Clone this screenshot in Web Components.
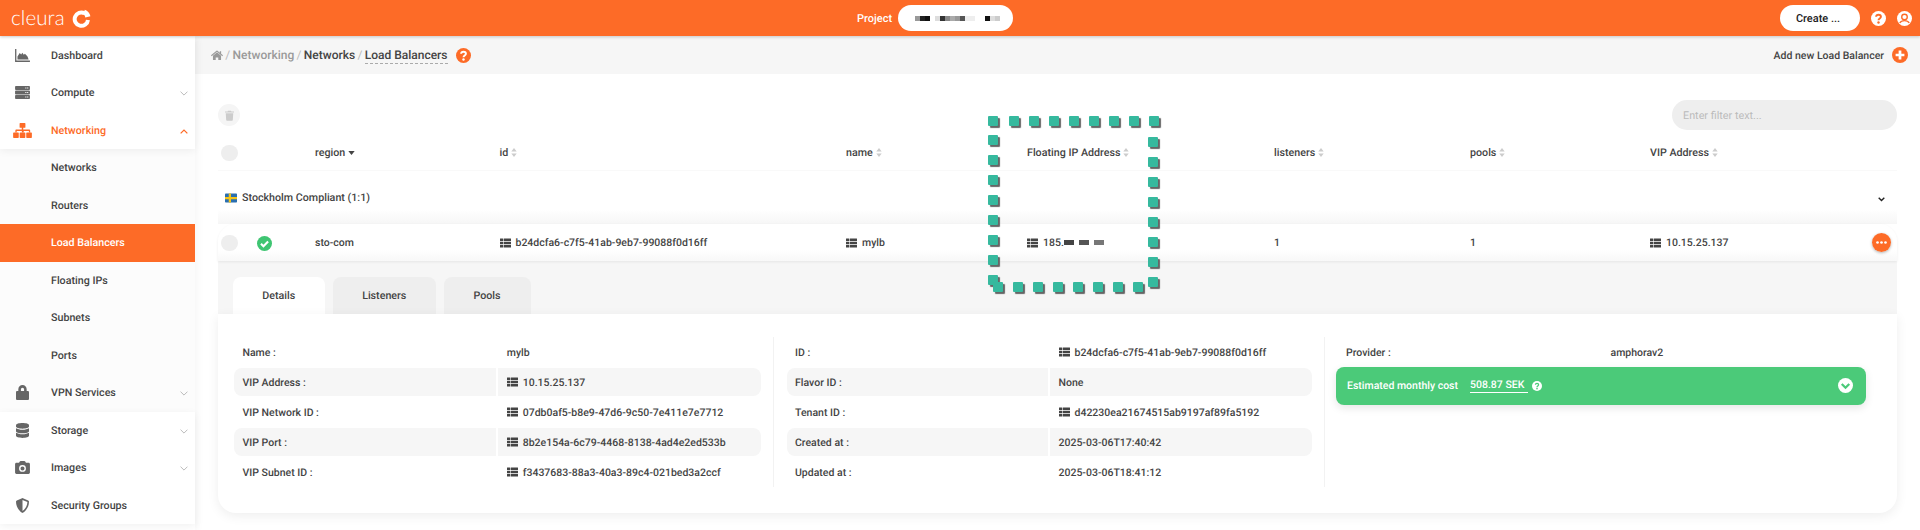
<!DOCTYPE html>
<html><head><meta charset="utf-8"><title>Load Balancers</title>
<style>
html,body{margin:0;padding:0;height:530px;overflow:hidden;background:#fff;font-family:Roboto,"Liberation Sans",sans-serif;color:#444;font-size:10.500px;font-weight:500;text-rendering:geometricPrecision}
</style></head><body>
<script>
const ICONS={
chart:'<svg viewBox="0 0 16 14"><path d="M0 0h1.4v12.4H16V14H0z"/><path d="M2.6 11.4V8l2.4-3.6 1.6 1.6 1.2-2 1.6 2.2 1.2-1.2 1.6 1.6 1.2 1.6 1.2 3.2z"/></svg>',
server:'<svg viewBox="0 0 16 14"><g fill-rule="evenodd"><path d="M.8 0h14.4c.4 0 .8.4.8.8v2.8c0 .4-.4.8-.8.8H.8c-.4 0-.8-.4-.8-.8V.8C0 .4.4 0 .8 0zM11 1.6v1.2h1.2V1.6zm2 0v1.2h1.2V1.6z"/><path d="M.8 4.9h14.4c.4 0 .8.4.8.8v2.6c0 .4-.4.8-.8.8H.8c-.4 0-.8-.4-.8-.8V5.700c0-.4.4-.8.8-.8zM11 6.400v1.200h1.200V6.400zm2 0v1.200h1.200V6.400z"/><path d="M.8 9.600h14.400c.4 0 .8.4.8.8v2.800c0 .4-.4.8-.8.8H.8c-.4 0-.8-.4-.8-.8v-2.800c0-.4.4-.8.8-.8zM11 11.200v1.200h1.200v-1.200zm2 0v1.200h1.200v-1.200z"/></g></svg>',
sitemap:'<svg viewBox="0 0 20 16"><path d="M7.500 0h5c.3 0 .6.300.6.600v3.800c0 .3-.3.600-.6.600h-1.700v2h6.400c.6 0 1 .4 1 1V10h-1.400V8.400h-5.500V10H9.300V8.400H3.800V10H2.400V7.900c0-.5.500-.9 1-.9h5.800V5H7.500c-.3 0-.6-.3-.6-.6V.6c0-.3.3-.6.600-.6z"/><rect x="0" y="10" width="6" height="6" rx=".7"/><rect x="7" y="10" width="6" height="6" rx=".7"/><rect x="14" y="10" width="6" height="6" rx=".7"/></svg>',
lock:'<svg viewBox="0 0 14 16"><path d="M11.500 6.500V4.600C11.500 2 9.500 0 7 0S2.500 2 2.500 4.600v1.900H1.400C.6 6.500 0 7.100 0 7.900v6.700C0 15.400.6 16 1.400 16h11.200c.8 0 1.400-.6 1.400-1.400V7.900c0-.8-.6-1.400-1.400-1.400zm-2.800 0H5.300V4.600C5.300 3.600 6 2.800 7 2.800s1.700.8 1.700 1.800z"/></svg>',
database:'<svg viewBox="0 0 14 16"><path d="M14 2.300v1.400C14 5 10.900 6 7 6S0 5 0 3.700V2.300C0 1 3.100 0 7 0s7 1 7 2.300z"/><path d="M14 5.500v3.200C14 10 10.900 11 7 11S0 10 0 8.700V5.500c1.500 1 4.200 1.600 7 1.600s5.500-.6 7-1.600z"/><path d="M14 10.500v3.200C14 15 10.900 16 7 16s-7-1-7-2.300v-3.200c1.500 1 4.200 1.600 7 1.600s5.500-.6 7-1.600z"/></svg>',
camera:'<svg viewBox="0 0 16 14"><path fill-rule="evenodd" d="M16 3.500v9C16 13.300 15.300 14 14.500 14h-13C.7 14 0 13.300 0 12.500v-9C0 2.700.7 2 1.500 2h2.800l.4-1C5 .4 5.600 0 6.200 0h3.600c.6 0 1.200.4 1.500 1l.4 1h2.800c.8 0 1.500.7 1.500 1.500zM8 4.300a3.700 3.700 0 1 0 0 7.400 3.700 3.700 0 0 0 0-7.400zm0 1.500a2.200 2.200 0 1 1 0 4.400 2.200 2.200 0 0 1 0-4.400z"/></svg>',
shield:'<svg viewBox="0 0 14 16"><path fill-rule="evenodd" d="M13.100 2.500 7.500.1a1.300 1.300 0 0 0-1 0L.9 2.500C.4 2.700 0 3.200 0 3.700 0 9.600 3.400 13.700 6.500 15.900c.3.200.7.200 1 0C10 14.100 14 10.300 14 3.700c0-.5-.4-1-.9-1.200zM7 13.900V2l5.300 2.200C12.100 9 9.400 12.200 7 13.900z"/></svg>',
home:'<svg viewBox="0 0 16 13"><path d="M8 2.300 2.600 6.800v5.200c0 .3.200.5.500.5h3.200V9.200h3.400v3.300h3.200c.3 0 .5-.2.500-.5V6.800z"/><path d="M16 6.300 13.500 4.200V.9h-1.800v1.800L8.700.3a1 1 0 0 0-1.400 0L0 6.300l.9 1.100L8 1.500l7.100 5.900z"/></svg>',
th:'<svg viewBox="0 0 12 10"><g><rect width="3.400" height="2.800" rx=".3"/><rect x="4" width="8" height="2.800" rx=".3"/><rect y="3.600" width="3.400" height="2.800" rx=".3"/><rect x="4" y="3.600" width="8" height="2.800" rx=".3"/><rect y="7.200" width="3.400" height="2.800" rx=".3"/><rect x="4" y="7.200" width="8" height="2.800" rx=".3"/></g></svg>',
trash:'<svg viewBox="0 0 12 14"><path d="M0 1.500h3.500L4 .5h4l.5 1H12v1.500H0z"/><path d="M1 4h10l-.6 9c0 .6-.5 1-1 1H2.600c-.5 0-1-.4-1-1z"/></svg>',
sort:'<svg viewBox="0 0 6 10"><path d="M3 0l3 4H0zM3 10 0 6h6z"/></svg>',
caret:'<svg viewBox="0 0 8 5"><path d="M0 0h8L4 5z"/></svg>',
chev:'<svg viewBox="0 0 10 6"><path d="M.7.7 5 5 9.300.7" fill="none" stroke="currentColor" stroke-width="1"/></svg>',
chevbold:'<svg viewBox="0 0 10 7"><path d="M1 1l4 4 4-4" fill="none" stroke="currentColor" stroke-width="2"/></svg>',
chevup:'<svg viewBox="0 0 10 6"><path d="M.8 5.300 5 1.200l4.200 4.100" fill="none" stroke="currentColor" stroke-width="1.600"/></svg>'
};
const q=(bg,fg,sw=2.6)=>`<svg viewBox="0 0 20 20"><circle cx="10" cy="10" r="10" fill="${bg}"/><path d="M6.800 7.600C6.900 5.900 8.200 4.900 10 4.900c1.900 0 3.200 1.100 3.200 2.700 0 2.300-3.200 2.300-3.200 4.700" fill="none" stroke="${fg}" stroke-width="${sw}"/><circle cx="10" cy="15.300" r="1.600" fill="${fg}"/></svg>`;
Object.assign(ICONS,{
helporange:q('#fd6b27','#fff'),
helpwhite:q('#fff','#fd6b27'),
helpgreen:q('#fff','#4bca79'),
user:'<svg viewBox="0 0 20 20"><circle cx="10" cy="10" r="10" fill="#fff"/><circle cx="10" cy="8" r="3.700" fill="none" stroke="#fd6b27" stroke-width="1.800"/><path d="M3.700 16c1.300-2.300 3.500-3.200 6.300-3.200s5 .9 6.300 3.200" fill="none" stroke="#fd6b27" stroke-width="1.800"/></svg>',
plus:'<svg viewBox="0 0 20 20"><circle cx="10" cy="10" r="10" fill="#fd6b27"/><path d="M10 4.500v11M4.500 10h11" stroke="#fff" stroke-width="3.400" fill="none"/></svg>',
dots:'<svg viewBox="0 0 20 20"><circle cx="10" cy="10" r="10" fill="#fd6b27"/><circle cx="5.800" cy="10" r="1.400" fill="#fff"/><circle cx="10" cy="10" r="1.400" fill="#fff"/><circle cx="14.200" cy="10" r="1.400" fill="#fff"/></svg>',
check:'<svg viewBox="0 0 20 20"><circle cx="10" cy="10" r="10" fill="#3fc572"/><path d="M5.300 10.300l3.300 3.300 6.200-6.400" fill="none" stroke="#fff" stroke-width="2.800"/></svg>',
chevcircle:'<svg viewBox="0 0 20 20"><circle cx="10" cy="10" r="10" fill="#fff"/><path d="M5 8l5 5 5-5" fill="none" stroke="#4bca79" stroke-width="3"/></svg>',
flag:'<svg viewBox="0 0 16 12"><rect width="16" height="12" rx="1" fill="#2a6fb0"/><path d="M5 0h3v12H5zM0 4.500h16v3H0z" fill="#f5c518"/></svg>',
logo:'<svg viewBox="0 0 20 20"><path d="M13.200 4.600A7 7 0 1 0 16.800 11.500" fill="none" stroke="#fff" stroke-width="4.200"/><path d="M13.500.8A9.500 9.500 0 0 1 19.400 7.500L14 9A4 4 0 0 0 12 5.500z" fill="#fff"/></svg>'
});
const el=(name,html,extra={})=>customElements.define(name,class extends HTMLElement{
  connectedCallback(){ if(this.shadowRoot) return; const r=this.attachShadow({mode:'open'}); r.innerHTML=typeof html==='function'?html(this):html; extra.init&&extra.init(this,r);}
});
el('cl-icon',h=>{const s=h.getAttribute('size')||'12',[w,he]=s.split('x');return `<style>:host{display:inline-flex;flex:none;width:${w}px;height:${he||w}px;color:${h.getAttribute('color')||'inherit'};fill:currentColor;line-height:0}svg{width:100%;height:100%;display:block}</style>${ICONS[h.getAttribute('name')]}`});

el('cl-topbar',`<style>:host{display:flex;align-items:center;height:36px;background:#fd6b27;box-shadow:0 1px 3px rgba(0,0,0,.2);position:relative;z-index:3;color:#fff}
.logo{display:flex;align-items:center;width:852px;padding-left:11px;box-sizing:border-box;font:300 20.500px Lato,sans-serif;letter-spacing:.1px;gap:7px}
.proj{font-weight:500;font-size:11px;margin:0 8px 0 5px;width:33px}
.pill{height:26px;background:#fff;border-radius:13px;display:flex;align-items:center;color:#000;box-sizing:border-box}
.sel{width:115px;padding:0 0 0 17px}.sel i{display:block;width:5px;height:5px}
.create{width:80px;margin-left:767px;justify-content:center;font-weight:500;font-size:11px;color:#222;padding-right:4px}
.ic{margin-left:11px;display:flex;gap:11px;align-items:center}</style>
<div class="logo"><span>cleura</span><cl-icon name="logo" size="19"></cl-icon></div>
<span class="proj"><slot name="project"></slot></span>
<div class="pill sel"><i style="background:#999"></i><i style="background:#222"></i><i style="background:#111"></i><i style="background:#fff"></i><i style="background:#ddd"></i><i style="background:#333"></i><i style="background:#888"></i><i style="background:#aaa"></i><i style="background:#999"></i><i style="background:#555"></i><i style="background:#eee"></i><i style="background:#eee"></i><i style="background:#fff"></i><i style="background:#fff"></i><i style="background:#111"></i><i style="background:#ddd"></i><i style="background:#ccc"></i></div>
<div class="pill create"><slot name="create"></slot></div>
<div class="ic"><cl-icon name="helpwhite" size="15"></cl-icon><cl-icon name="user" size="15"></cl-icon></div>`);

el('cl-sidebar',`<style>:host{display:flex;flex-direction:column;width:195px;flex:none;background:#fff;box-shadow:0 0 10px rgba(0,0,0,.06);position:relative;z-index:2;padding-top:.500px}</style><slot></slot>`);
el('cl-nav-group',`<style>:host{display:block;background:#fff}:host([sub]){background:#fcfcfc}:host([raised]){box-shadow:0 2px 8px rgba(0,0,0,.06);position:relative;z-index:1}</style><slot></slot>`);
el('cl-nav-item',`<style>:host{display:flex;align-items:center;height:37.500px;color:#444;position:relative;font-size:10.700px}
:host([current]){color:#fd6b27}:host([active]){background:#fd6b27;color:#fff}
.ic{width:51px;flex:none;display:flex;justify-content:center;padding-right:7px;box-sizing:border-box;color:#666}
:host([current]) .ic{color:#fd6b27}
.t{flex:1}.ch{width:22px;flex:none;display:none;color:#aaa;padding-left:7px;box-sizing:border-box}:host([more]) .ch{display:block}:host([current]) .ch{color:#fd6b27}</style>
<span class="ic"><slot name="icon"></slot></span><span class="t"><slot></slot></span><span class="ch"><slot name="chev"></slot></span>`);

el('cl-breadbar',`<style>:host{display:flex;align-items:center;height:38px;background:#f6f6f6;flex:none;padding:0 12px 0 16px;font-size:12px;color:#888;font-weight:500}
.l{display:flex;align-items:center;flex:1;gap:2.300px}.r{display:flex;align-items:center;gap:8px;color:#444;font-size:10.500px}
</style><div class="l"><slot name="left"></slot></div><div class="r"><slot name="right"></slot></div>`);
el('cl-crumb',`<style>:host{display:inline-block;color:#9a9a9a}:host([dark]){color:#444}:host([cur]){color:#444;border-bottom:1px dashed #aaa;padding-bottom:1px;margin-top:2px}:host([sep]){color:#bbb;font-weight:400}</style><slot></slot>`);

el('cl-toolbar',`<style>:host{display:flex;align-items:center;justify-content:space-between;height:30px;margin-top:26px}
.tr{width:22px;height:22px;margin-left:0;border-radius:50%;background:#f5f5f5;display:flex;align-items:center;justify-content:center;color:#ccc}
.f{width:225px;height:30px;border-radius:15px;background:#eee;color:#bbb;display:flex;align-items:center;padding-left:11px;box-sizing:border-box;font-weight:400;font-size:10.800px}</style>
<div class="tr"><cl-icon name="trash" size="9x11"></cl-icon></div><div class="f"><slot></slot></div>`);

const cols='97px 184.500px 346.500px 181px 247px 196px 180px 1fr';
el('cl-table-head',`<style>:host{display:grid;grid-template-columns:${cols};align-items:center;height:35px;border-bottom:1px solid #f9f9f9;margin-top:5px;position:relative;font-size:10.700px}
.cb{position:absolute;left:3px;top:9.500px;width:16.500px;height:16.500px;border-radius:50%;background:#eee}</style><div class="cb"></div><span></span><slot></slot>`);
el('cl-th',`<style>:host{display:inline-flex;align-items:center;gap:3px;color:#444}</style><slot></slot>`);
el('cl-group',`<style>:host{display:flex;align-items:center;height:53px;padding:0 12px 0 7px;background:linear-gradient(#fff 72%,#f6f6f6);gap:5px;color:#444;font-size:10.700px}.t{flex:1}.c{color:#222;margin-top:2px}</style>
<cl-icon name="flag" size="12x10"></cl-icon><span class="t"><slot></slot></span><span class="c"><cl-icon name="chevbold" size="7x5"></cl-icon></span>`);
el('cl-row',`<style>:host{display:grid;grid-template-columns:${cols};align-items:center;height:37px;background:linear-gradient(#fff 70%,#f8f8f8);border-radius:18px 18px 0 0;position:relative;box-shadow:0 1px 3px rgba(0,0,0,.07)}
.cb{position:absolute;left:3px;top:10.500px;width:16.500px;height:16.500px;border-radius:50%;background:#eee}
.st{position:absolute;left:38.500px;top:11.500px;display:flex}.m{position:absolute;right:6.500px;top:9px;display:flex;border-radius:50%;box-shadow:0 1px 3px rgba(0,0,0,.3)}</style>
<div class="cb"></div><div class="st"><cl-icon name="check" size="15"></cl-icon></div><span></span><slot></slot><div class="m"><cl-icon name="dots" size="19"></cl-icon></div>`);
el('cl-idv',`<style>:host{display:inline-flex;align-items:center;gap:5px;color:#444;white-space:nowrap}</style><cl-icon name="th" size="11x10"></cl-icon><span><slot></slot></span>`);
el('cl-redact',`<style>:host{display:inline-flex;gap:5px;vertical-align:middle;margin-top:-2px}i{display:block;width:10px;height:5px}</style><i style="background:#444"></i><i style="background:#555"></i><i style="background:#777"></i>`);

el('cl-tabs',`<style>:host{display:flex;align-items:flex-end;gap:7.500px;height:53px;background:#f6f6f6;padding-left:14.500px;box-sizing:border-box;font-size:10.700px}</style><slot></slot>`);
el('cl-tab',`<style>:host{display:flex;align-items:center;justify-content:center;height:37px;background:#eee;border-radius:8px 8px 0 0;color:#444;box-sizing:border-box}:host([on]){background:#fff}</style><slot></slot>`);

el('cl-details',`<style>:host{display:grid;grid-template-columns:556px 551px 1fr;height:199px;background:#fff;border-radius:0 0 18px 18px;box-shadow:0 3px 12px rgba(0,0,0,.07);padding-top:23px;box-sizing:border-box;align-items:start}</style><slot></slot>`);
el('cl-col',`<style>:host{display:flex;flex-direction:column;height:150px;box-sizing:border-box;border-right:1px solid #f2f2f2;padding:0 12.500px 0 12.500px}:host([first]){padding-left:16px}:host([last]){border:0;padding:0 31px 0 10.500px}</style><slot></slot>`);
el('cl-kv',`<style>:host{display:grid;grid-template-columns:1fr 1fr;column-gap:2px;height:28px;margin:1px 0;align-items:center;border-radius:8px;overflow:hidden;color:#444}
:host([alt]) .a,:host([alt]) .b{background:#f6f6f6}.a,.b{height:28px;display:flex;align-items:center;padding-left:8.500px;box-sizing:border-box}</style>
<div class="a"><slot name="k"></slot></div><div class="b"><slot name="v"></slot></div>`);
el('cl-provider',`<style>:host{display:grid;grid-template-columns:264.500px 1fr;height:30px;align-items:center;padding-left:10.500px;color:#444}</style><slot></slot>`);
el('cl-cost',`<style>:host{display:flex;align-items:center;height:38px;margin-top:-.500px;border-radius:8px;background:#4bca79;color:#fff;box-shadow:0 3px 8px rgba(0,0,0,.1);padding:0 13px 0 11.500px;box-sizing:border-box}
.a{display:inline-block;margin-left:12px;border-bottom:1.500px solid #fff;padding:0 4px 1px 0}.q{margin-left:4px;display:flex}.sp{flex:1}</style>
<slot name="l"></slot><span class="a"><slot name="v"></slot></span><span class="q"><cl-icon name="helpgreen" size="10"></cl-icon></span><span class="sp"></span><cl-icon name="chevcircle" size="15"></cl-icon>`);

el('cl-highlight',`<style>:host{position:absolute;left:988.300px;top:116.300px;width:171px;height:177px;z-index:5;display:block}
i{position:absolute;width:10px;height:10px;background:#36b99e;border-radius:1px;box-shadow:2px 2px 1px #666}</style><div id="d"></div>`,{init(h,r){
  const pts=[[0,0],...[21,41,61,81,101,121,141,161].map(x=>[x,0]),...[19,39,59,79,99,119,139,159].map(y=>[0,y]),...[21,41,61,81,101,121,141,161].map(y=>[160,y]),...[5,25,45,65,85,105,125,145].map(x=>[x,166])];
  r.getElementById('d').innerHTML=pts.map(([x,y])=>`<i style="left:${x}px;top:${y}px"></i>`).join('');
}});

el('cl-app',`<style>:host{display:flex;flex-direction:column;height:530px;width:1920px;position:relative;overflow:hidden}
.b{display:flex;flex:1;min-height:0}.m{flex:1;display:flex;flex-direction:column;min-width:0}
.c{padding:0 23px;display:flex;flex-direction:column}</style>
<slot name="top"></slot><div class="b"><slot name="side"></slot><div class="m"><slot name="bar"></slot><div class="c"><slot></slot></div></div></div><slot name="over"></slot>`);
</script>
<cl-app>
<cl-topbar slot="top"><span slot="project">Project</span><span slot="create">Create ...</span></cl-topbar>
<cl-sidebar slot="side">
 <cl-nav-group raised>
  <cl-nav-item><cl-icon slot="icon" name="chart" size="15x13"></cl-icon>Dashboard</cl-nav-item>
  <cl-nav-item more><cl-icon slot="icon" name="server" size="15x13"></cl-icon>Compute<cl-icon slot="chev" name="chev" size="8x5"></cl-icon></cl-nav-item>
  <cl-nav-item more current><cl-icon slot="icon" name="sitemap" size="19x15"></cl-icon>Networking<cl-icon slot="chev" name="chevup" size="8x5"></cl-icon></cl-nav-item>
 </cl-nav-group>
 <cl-nav-group sub>
  <cl-nav-item>Networks</cl-nav-item>
  <cl-nav-item>Routers</cl-nav-item>
  <cl-nav-item active>Load Balancers</cl-nav-item>
  <cl-nav-item>Floating IPs</cl-nav-item>
  <cl-nav-item>Subnets</cl-nav-item>
  <cl-nav-item>Ports</cl-nav-item>
  <cl-nav-item more><cl-icon slot="icon" name="lock" size="13x15"></cl-icon>VPN Services<cl-icon slot="chev" name="chev" size="8x5"></cl-icon></cl-nav-item>
 </cl-nav-group>
 <cl-nav-group raised>
  <cl-nav-item more><cl-icon slot="icon" name="database" size="13x15"></cl-icon>Storage<cl-icon slot="chev" name="chev" size="8x5"></cl-icon></cl-nav-item>
  <cl-nav-item more><cl-icon slot="icon" name="camera" size="15x13"></cl-icon>Images<cl-icon slot="chev" name="chev" size="8x5"></cl-icon></cl-nav-item>
  <cl-nav-item><cl-icon slot="icon" name="shield" size="13x15"></cl-icon>Security Groups</cl-nav-item>
 </cl-nav-group>
</cl-sidebar>
<cl-breadbar slot="bar">
 <cl-icon slot="left" name="home" size="12x11" color="#999"></cl-icon>
 <cl-crumb slot="left" sep>/</cl-crumb><cl-crumb slot="left">Networking</cl-crumb>
 <cl-crumb slot="left" sep>/</cl-crumb><cl-crumb slot="left" dark>Networks</cl-crumb>
 <cl-crumb slot="left" sep>/</cl-crumb><cl-crumb slot="left" cur>Load Balancers</cl-crumb>
 <cl-icon slot="left" name="helporange" size="15" style="margin-left:6px"></cl-icon>
 <span slot="right">Add new Load Balancer</span><cl-icon slot="right" name="plus" size="16"></cl-icon>
</cl-breadbar>
<cl-toolbar>Enter filter text...</cl-toolbar>
<cl-table-head>
 <cl-th>region <cl-icon name="caret" size="7x4"></cl-icon></cl-th>
 <cl-th>id <cl-icon name="sort" size="6x9" color="#ccc"></cl-icon></cl-th>
 <cl-th>name <cl-icon name="sort" size="6x9" color="#ccc"></cl-icon></cl-th>
 <cl-th>Floating IP Address <cl-icon name="sort" size="6x9" color="#ccc"></cl-icon></cl-th>
 <cl-th>listeners <cl-icon name="sort" size="6x9" color="#ccc"></cl-icon></cl-th>
 <cl-th>pools <cl-icon name="sort" size="6x9" color="#ccc"></cl-icon></cl-th>
 <cl-th>VIP Address <cl-icon name="sort" size="6x9" color="#ccc"></cl-icon></cl-th>
</cl-table-head>
<cl-group>Stockholm Compliant (1:1)</cl-group>
<cl-row>
 <span>sto-com</span>
 <cl-idv>b24dcfa6-c7f5-41ab-9eb7-99088f0d16ff</cl-idv>
 <cl-idv>mylb</cl-idv>
 <cl-idv>185.<cl-redact></cl-redact></cl-idv>
 <span>1</span><span>1</span>
 <cl-idv>10.15.25.137</cl-idv>
</cl-row>
<cl-tabs><cl-tab on style="width:92.500px">Details</cl-tab><cl-tab style="width:103.500px">Listeners</cl-tab><cl-tab style="width:87px">Pools</cl-tab></cl-tabs>
<cl-details>
 <cl-col first>
  <cl-kv><span slot="k">Name :</span><span slot="v">mylb</span></cl-kv>
  <cl-kv alt><span slot="k">VIP Address :</span><cl-idv slot="v">10.15.25.137</cl-idv></cl-kv>
  <cl-kv><span slot="k">VIP Network ID :</span><cl-idv slot="v">07db0af5-b8e9-47d6-9c50-7e411e7e7712</cl-idv></cl-kv>
  <cl-kv alt><span slot="k">VIP Port :</span><cl-idv slot="v">8b2e154a-6c79-4468-8138-4ad4e2ed533b</cl-idv></cl-kv>
  <cl-kv><span slot="k">VIP Subnet ID :</span><cl-idv slot="v">f3437683-88a3-40a3-89c4-021bed3a2ccf</cl-idv></cl-kv>
 </cl-col>
 <cl-col>
  <cl-kv><span slot="k">ID :</span><cl-idv slot="v">b24dcfa6-c7f5-41ab-9eb7-99088f0d16ff</cl-idv></cl-kv>
  <cl-kv alt><span slot="k">Flavor ID :</span><span slot="v">None</span></cl-kv>
  <cl-kv><span slot="k">Tenant ID :</span><cl-idv slot="v">d42230ea21674515ab9197af89fa5192</cl-idv></cl-kv>
  <cl-kv alt><span slot="k">Created at :</span><span slot="v">2025-03-06T17:40:42</span></cl-kv>
  <cl-kv><span slot="k">Updated at :</span><span slot="v">2025-03-06T18:41:12</span></cl-kv>
 </cl-col>
 <cl-col last>
  <cl-provider><span>Provider :</span><span>amphorav2</span></cl-provider>
  <cl-cost><span slot="l">Estimated monthly cost</span><span slot="v">508.87 SEK</span></cl-cost>
 </cl-col>
</cl-details>
<cl-highlight slot="over"></cl-highlight>
</cl-app>
</body></html>
